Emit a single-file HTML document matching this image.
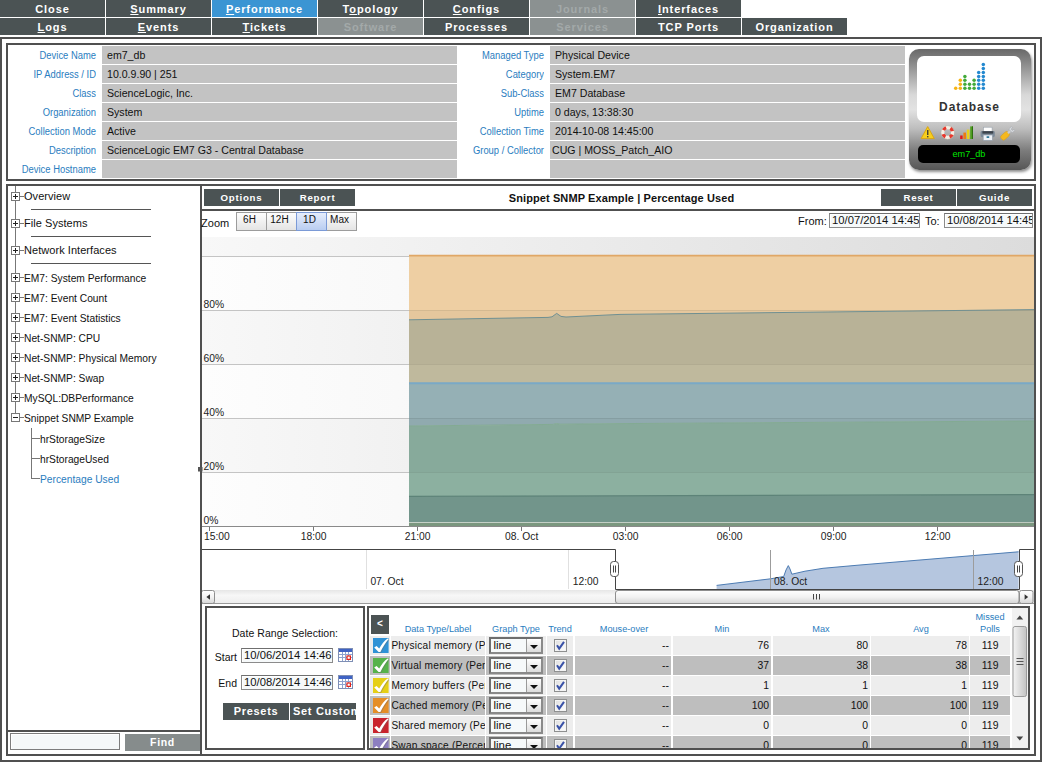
<!DOCTYPE html>
<html>
<head>
<meta charset="utf-8">
<title>Device Performance</title>
<style>
*{box-sizing:border-box;margin:0;padding:0}
html,body{width:1042px;height:762px;overflow:hidden;background:#fff}
body{font-family:"Liberation Sans",sans-serif;font-size:11px;color:#111;position:relative}
.abs{position:absolute}
/* top tabs */
.tab{position:absolute;width:105px;height:17px;padding-top:1px;background:#4b5354;color:#fff;font-weight:bold;font-size:11px;letter-spacing:.9px;text-align:center;line-height:17px;white-space:nowrap}
.tab.r2{top:18px}
.tab.r1{top:0}
.tab.act{background:#3b95d3}
.tab.dis{background:#8b9191;color:#a3a9a9}
.tab u{text-decoration:underline}
/* frames */
#outer{left:0;top:37px;width:1042px;height:725px;border:2px solid #505050}
#devp{left:6px;top:43px;width:1030px;height:138px;border:2px solid #505050}
#lowp{left:6px;top:184px;width:1030px;height:572px;border:2px solid #505050}
/* device rows */
.dl{position:absolute;height:18px;line-height:19px;font-size:10px;color:#2a7dc0;text-align:right;white-space:nowrap;transform:scaleX(.94);transform-origin:100% 50%}
.dv{position:absolute;height:18px;line-height:19px;font-size:10.6px;color:#111;background:#c3c3c3;white-space:nowrap;padding-left:5px}
/* dark buttons */
.btn{position:absolute;background:#4b5354;color:#fff;font-weight:bold;font-size:9.7px;letter-spacing:.75px;text-align:center;white-space:nowrap;overflow:hidden}

.tn{position:absolute;left:0;height:0;white-space:nowrap}
.tn i.pm{position:absolute;left:11px;top:-4px;width:9px;height:9px;border:1px solid #777;background:#fff}
.tn i.pm:before{content:"";position:absolute;left:1px;top:3px;width:5px;height:1px;background:#222}
.tn i.pm.p:after{content:"";position:absolute;left:3px;top:1px;width:1px;height:5px;background:#222}
.tn b{position:absolute;left:20px;top:0;width:4px;height:1px;background:#777}
.tn span{position:absolute;left:24px;top:-6.5px;line-height:14px;font-size:10.9px;transform:scaleX(.94);transform-origin:0 50%}
.tn.big span{font-size:11px;top:-7px;transform:none;letter-spacing:.05px}
.tc{position:absolute;left:40px;height:14px;margin-top:-6.5px;line-height:14px;font-size:10.9px;transform:scaleX(.94);transform-origin:0 50%;white-space:nowrap}

.zb{position:absolute;top:212px;width:31px;height:19px;border:1px solid #9c9c9c;background:linear-gradient(to bottom,#fdfdfd,#e4e4e4);font-size:10px;line-height:13px;text-align:center;color:#111;padding-top:0;padding-right:4px}
.zb.on{background:linear-gradient(to bottom,#e6edfb,#b9cdf1);border-color:#7b9ad6;z-index:2}
.din{position:absolute;border:1px solid #8b8b8b;border-top-color:#6f6f6f;background:#f6f9fa;font-size:11.25px;line-height:13px;padding-left:2px;white-space:nowrap;overflow:hidden;color:#111;box-shadow:inset 1px 1px 0 #fff}

.th{position:absolute;width:100px;text-align:center;font-size:9.2px;line-height:12px;color:#2a7dc0;white-space:nowrap}
.td{position:absolute;height:19px;line-height:20px;font-size:10.4px;color:#111;white-space:nowrap}
.sel{position:absolute;left:3px;top:.5px;width:54px;height:17px;border:2px solid #6e6e6e;border-right-color:#8a8a8a;border-bottom-color:#8a8a8a;background:#f6f9fa;font-size:11.4px;line-height:12px}
.sel span{position:absolute;left:2.5px;top:0}
.sel i{position:absolute;right:0;top:0;width:15px;height:13px;background:linear-gradient(to bottom,#fff,#dcdcdc);border-left:1px solid #9a9a9a}
.sel i:after{content:"";position:absolute;left:2.6px;top:6.5px;border:4.4px solid transparent;border-top:4.2px solid #111;border-bottom:0}
.cb{position:absolute;left:7.5px;top:3px;width:13px;height:13px;border:1px solid #8e8f8f;background:linear-gradient(135deg,#dedede,#fff);box-shadow:inset 0 0 0 1px #f4f4f4}
.cb svg{position:absolute;left:0;top:0}
</style>
</head>
<body>
<!-- TABS -->
<div class="tab r1" style="left:0"><span>Close</span></div>
<div class="tab r1" style="left:106px"><u>S</u>ummary</div>
<div class="tab r1 act" style="left:212px"><u>P</u>erformance</div>
<div class="tab r1" style="left:318px">T<u>o</u>pology</div>
<div class="tab r1" style="left:424px"><u>C</u>onfigs</div>
<div class="tab r1 dis" style="left:530px">Journals</div>
<div class="tab r1" style="left:636px"><u>I</u>nterfaces</div>
<div class="tab r2" style="left:0"><u>L</u>ogs</div>
<div class="tab r2" style="left:106px"><u>E</u>vents</div>
<div class="tab r2" style="left:212px"><u>T</u>ickets</div>
<div class="tab r2 dis" style="left:318px">Software</div>
<div class="tab r2" style="left:424px">Processes</div>
<div class="tab r2 dis" style="left:530px">Services</div>
<div class="tab r2" style="left:636px">TCP Ports</div>
<div class="tab r2" style="left:742px">Organization</div>

<!-- FRAMES -->
<div id="outer" class="abs"></div>
<div id="devp" class="abs"></div>
<div id="lowp" class="abs"></div>

<!-- DEVICE PANEL -->
<div id="dev">
<div class="dl" style="left:8px;width:88px;top:46px">Device Name</div><div class="dv" style="left:102px;width:355px;top:46px">em7_db</div>
<div class="dl" style="left:8px;width:88px;top:65px">IP Address / ID</div><div class="dv" style="left:102px;width:355px;top:65px">10.0.9.90 | 251</div>
<div class="dl" style="left:8px;width:88px;top:84px">Class</div><div class="dv" style="left:102px;width:355px;top:84px">ScienceLogic, Inc.</div>
<div class="dl" style="left:8px;width:88px;top:103px">Organization</div><div class="dv" style="left:102px;width:355px;top:103px">System</div>
<div class="dl" style="left:8px;width:88px;top:122px">Collection Mode</div><div class="dv" style="left:102px;width:355px;top:122px">Active</div>
<div class="dl" style="left:8px;width:88px;top:141px">Description</div><div class="dv" style="left:102px;width:355px;top:141px">ScienceLogic EM7 G3 - Central Database</div>
<div class="dl" style="left:8px;width:88px;top:160px">Device Hostname</div><div class="dv" style="left:102px;width:355px;top:160px"></div>

<div class="dl" style="left:458px;width:86px;top:46px">Managed Type</div><div class="dv" style="left:550px;width:355px;top:46px">Physical Device</div>
<div class="dl" style="left:458px;width:86px;top:65px">Category</div><div class="dv" style="left:550px;width:355px;top:65px">System.EM7</div>
<div class="dl" style="left:458px;width:86px;top:84px">Sub-Class</div><div class="dv" style="left:550px;width:355px;top:84px">EM7 Database</div>
<div class="dl" style="left:458px;width:86px;top:103px">Uptime</div><div class="dv" style="left:550px;width:355px;top:103px">0 days, 13:38:30</div>
<div class="dl" style="left:458px;width:86px;top:122px">Collection Time</div><div class="dv" style="left:550px;width:355px;top:122px">2014-10-08 14:45:00</div>
<div class="dl" style="left:458px;width:86px;top:141px">Group / Collector</div><div class="dv" style="left:550px;width:355px;top:141px;padding-left:2px">CUG | MOSS_Patch_AIO</div>
<div class="dv" style="left:550px;width:355px;top:160px"></div>
</div>

<!-- DEVICE ICON BOX -->
<div class="abs" style="left:909px;top:49px;width:122px;height:121px;border-radius:10px;background:linear-gradient(to bottom,#686868 0%,#8a8a8a 12%,#d9d9d9 38%,#e2e2e2 50%,#bdbdbd 66%,#7c7c7c 84%,#565656 100%);box-shadow:1px 2px 3px rgba(0,0,0,.45)"></div>
<div class="abs" style="left:917px;top:56px;width:104px;height:66px;border-radius:7px;background:#fff"></div>
<svg class="abs" style="left:945px;top:55px" width="50" height="40" viewBox="0 0 50 40">
<g fill="#f5b416"><circle cx="10.7" cy="33.2" r="1.75"/><circle cx="15.3" cy="33.2" r="1.75"/><circle cx="15.3" cy="29.25" r="1.75"/><circle cx="15.3" cy="25.3" r="1.75"/></g>
<g fill="#43aa3a"><circle cx="19.9" cy="33.2" r="1.75"/><circle cx="19.9" cy="29.25" r="1.75"/><circle cx="19.9" cy="25.3" r="1.75"/><circle cx="19.9" cy="21.4" r="1.75"/><circle cx="24.5" cy="33.2" r="1.75"/><circle cx="24.5" cy="29.25" r="1.75"/><circle cx="29.1" cy="33.2" r="1.75"/><circle cx="29.1" cy="29.25" r="1.75"/><circle cx="29.1" cy="25.3" r="1.75"/></g>
<g fill="#2389d0"><circle cx="33.7" cy="33.2" r="1.75"/><circle cx="33.7" cy="29.25" r="1.75"/><circle cx="33.7" cy="25.3" r="1.75"/><circle cx="33.7" cy="21.4" r="1.75"/><circle cx="33.7" cy="17.4" r="1.75"/><circle cx="38.3" cy="33.2" r="1.75"/><circle cx="38.3" cy="29.25" r="1.75"/><circle cx="38.3" cy="25.3" r="1.75"/><circle cx="38.3" cy="21.4" r="1.75"/><circle cx="38.3" cy="17.4" r="1.75"/><circle cx="38.3" cy="13.5" r="1.75"/><circle cx="38.3" cy="9.6" r="1.75"/></g>
</svg>
<div class="abs" style="left:917px;top:98px;width:104px;text-align:center;font-weight:bold;font-size:12px;letter-spacing:.95px;color:#333;line-height:16px;padding-left:1px;margin-top:1px">Database</div>
<!-- small icons -->
<svg class="abs" style="left:919px;top:124px" width="100" height="19" viewBox="0 0 100 19">
<!-- warning -->
<path d="M8.7 2.6 L15.3 14.6 L2.1 14.6 Z" fill="#f7cf1d" stroke="#d9a514" stroke-width="1" stroke-linejoin="round"/>
<rect x="8.1" y="6" width="1.3" height="5" fill="#333"/><rect x="8.1" y="12" width="1.3" height="1.4" fill="#333"/>
<!-- lifebuoy -->
<circle cx="28.7" cy="8.5" r="5" fill="none" stroke="#f4efe4" stroke-width="3.4"/>
<circle cx="28.7" cy="8.5" r="5" fill="none" stroke="#e8372c" stroke-width="3.4" stroke-dasharray="3.4 4.454" stroke-dashoffset="-2.227"/>
<circle cx="28.7" cy="8.5" r="6.8" fill="none" stroke="#b9b2a4" stroke-width=".5"/>
<!-- bars -->
<rect x="41.2" y="11.5" width="2.4" height="3.5" fill="#e1161b"/>
<rect x="44.4" y="8.6" width="2.6" height="6.4" fill="#ee7b12"/>
<rect x="47.8" y="5.6" width="2.6" height="9.4" fill="#e9d21a"/>
<rect x="51.2" y="2.4" width="2.8" height="12.6" fill="#4f9e1f"/>
<rect x="53" y="2.4" width="1" height="12.6" fill="#2f6e12"/>
<!-- printer -->
<rect x="64.5" y="3.2" width="8.6" height="4.5" fill="#fdfdfd" stroke="#9aa3ad" stroke-width=".6"/>
<rect x="61.6" y="7" width="14.2" height="6.2" rx="1.4" fill="#7d8b99"/>
<rect x="63.4" y="7.2" width="10.8" height="2.4" fill="#3c434b"/>
<rect x="64.2" y="11" width="9.2" height="5.4" fill="#eef3f8" stroke="#8d98a6" stroke-width=".6"/>
<rect x="67.6" y="12.3" width="2.6" height="1.6" fill="#1f6d8f"/>
<!-- wrench -->
<g transform="translate(88.5,9.6) rotate(-42)">
<rect x="-8" y="-2.7" width="9.4" height="5.4" rx="2.2" fill="#f5b81e" stroke="#d99c12" stroke-width=".5"/>
<rect x="0.6" y="-1.1" width="4" height="2.2" fill="#c9ccd0"/>
<path d="M4 -2.6 L7.6 -2.6 L7.6 -1 L5.8 -1 L5.8 1 L7.6 1 L7.6 2.6 L4 2.6 Z" fill="#d5d8dc" stroke="#9a9fa6" stroke-width=".4"/>
</g>
</svg>
<div class="abs" style="left:918px;top:145px;width:102px;height:18px;border-radius:5px;background:#000;color:#00e400;font-size:9.1px;text-align:center;line-height:19.5px">em7_db</div>


<!-- TREE -->
<div id="tree" style="font-size:11px;color:#111">
<div class="abs" style="left:15px;top:186px;width:1px;height:231px;background:#777"></div>
<div class="abs" style="left:31px;top:209px;width:120px;height:1px;background:#555"></div>
<div class="abs" style="left:31px;top:236px;width:120px;height:1px;background:#555"></div>
<div class="abs" style="left:31px;top:263px;width:120px;height:1px;background:#555"></div>
<div class="tn big" style="top:196px"><i class="pm p"></i><b></b><span>Overview</span></div>
<div class="tn big" style="top:223px"><i class="pm p"></i><b></b><span>File Systems</span></div>
<div class="tn big" style="top:250px"><i class="pm p"></i><b></b><span>Network Interfaces</span></div>
<div class="tn" style="top:277px"><i class="pm p"></i><b></b><span>EM7: System Performance</span></div>
<div class="tn" style="top:297px"><i class="pm p"></i><b></b><span>EM7: Event Count</span></div>
<div class="tn" style="top:317px"><i class="pm p"></i><b></b><span>EM7: Event Statistics</span></div>
<div class="tn" style="top:337px"><i class="pm p"></i><b></b><span>Net-SNMP: CPU</span></div>
<div class="tn" style="top:357px"><i class="pm p"></i><b></b><span>Net-SNMP: Physical Memory</span></div>
<div class="tn" style="top:377px"><i class="pm p"></i><b></b><span>Net-SNMP: Swap</span></div>
<div class="tn" style="top:397px"><i class="pm p"></i><b></b><span>MySQL:DBPerformance</span></div>
<div class="tn" style="top:417px"><i class="pm"></i><b></b><span>Snippet SNMP Example</span></div>
<div class="abs" style="left:31px;top:428px;width:1px;height:51px;background:#777"></div>
<div class="abs" style="left:31px;top:438px;width:9px;height:1px;background:#777"></div>
<div class="abs" style="left:31px;top:458px;width:9px;height:1px;background:#777"></div>
<div class="abs" style="left:31px;top:478px;width:9px;height:1px;background:#777"></div>
<div class="tc" style="top:438px">hrStorageSize</div>
<div class="tc" style="top:458px">hrStorageUsed</div>
<div class="tc" style="top:478px;color:#2a7dc0">Percentage Used</div>
</div>
<!-- find -->
<div class="abs" style="left:8px;top:730px;width:192px;height:2px;background:#505050"></div>
<div class="abs" style="left:200px;top:186px;width:2px;height:568px;background:#505050"></div>
<div class="abs" style="left:10px;top:733px;width:110px;height:17px;border:1px solid #7d7d7d;background:#f5f8f9;box-shadow:inset 1px 1px 0 #fff"></div>
<div class="btn" style="left:125px;top:734px;width:75px;height:17px;line-height:17px;background:#868c8c;font-size:10.5px;letter-spacing:.7px">Find</div>


<!-- CHART -->
<div class="btn" style="left:204px;top:189px;width:75px;height:17px;line-height:17px">Options</div>
<div class="btn" style="left:280px;top:189px;width:75px;height:17px;line-height:17px">Report</div>
<div class="btn" style="left:881px;top:189px;width:75px;height:17px;line-height:17px">Reset</div>
<div class="btn" style="left:957px;top:189px;width:75px;height:17px;line-height:17px">Guide</div>
<div class="abs" style="left:420px;top:191px;width:403px;text-align:center;font-weight:bold;font-size:11px;line-height:14px;letter-spacing:.1px;color:#111;white-space:nowrap">Snippet SNMP Example | Percentage Used</div>
<div class="abs" style="left:202px;top:209px;width:832px;height:2px;background:#505050"></div>
<!-- zoom row -->
<div class="abs" style="left:201px;top:216px;font-size:11px;line-height:14px;letter-spacing:.05px">Zoom</div>
<div class="zb" style="left:236px">6H</div><div class="zb" style="left:266px">12H</div><div class="zb on" style="left:296px">1D</div><div class="zb" style="left:326px">Max</div>
<div class="abs" style="left:798px;top:214px;font-size:11px;line-height:14px">From:</div>
<div class="din" style="left:829px;top:213px;width:91px;height:15px">10/07/2014 14:45</div>
<div class="abs" style="left:925px;top:214px;font-size:11px;line-height:14px">To:</div>
<div class="din" style="left:944px;top:213px;width:89px;height:15px">10/08/2014 14:45</div>
<svg class="abs" style="left:196px;top:232px" width="838" height="374" viewBox="196 232 838 374" font-family="Liberation Sans, sans-serif">
<defs>
<linearGradient id="bgL" x1="0" y1="0" x2="1" y2="0"><stop offset="0" stop-color="#fdfdfd"/><stop offset="1" stop-color="#ececec"/></linearGradient>
<linearGradient id="bgD" x1="0" y1="0" x2="1" y2="0"><stop offset="0" stop-color="#f8f8f8"/><stop offset="1" stop-color="#dcdcdc"/></linearGradient>
<linearGradient id="sb" x1="0" y1="0" x2="0" y2="1"><stop offset="0" stop-color="#ffffff"/><stop offset=".5" stop-color="#f2f2f2"/><stop offset="1" stop-color="#d6d6d6"/></linearGradient>
<linearGradient id="trk" x1="0" y1="0" x2="0" y2="1"><stop offset="0" stop-color="#e6e6e6"/><stop offset=".4" stop-color="#f7f7f7"/><stop offset="1" stop-color="#ededed"/></linearGradient>
<clipPath id="cp"><rect x="202" y="232" width="832" height="374"/></clipPath>
</defs>
<g clip-path="url(#cp)">
<!-- bands -->
<rect x="202" y="237" width="832" height="19" fill="url(#bgD)"/>
<rect x="202" y="256" width="832" height="54" fill="url(#bgL)"/>
<rect x="202" y="310" width="832" height="54" fill="url(#bgD)"/>
<rect x="202" y="364" width="832" height="54" fill="url(#bgL)"/>
<rect x="202" y="418" width="832" height="54" fill="url(#bgD)"/>
<rect x="202" y="472" width="832" height="54" fill="url(#bgL)"/>
<!-- gridlines -->
<g stroke="#c4c4c4" stroke-width="1"><path d="M202 256.5H1034M202 310.5H1034M202 364.5H1034M202 418.5H1034M202 472.5H1034"/></g>
<!-- series fills -->
<path d="M409 256 H1034 V309.6 L620 314.4 L566 317 L561 316.4 L556.7 313.4 L552 316.8 L548 317.4 L409 319.8 Z" fill="#eecfa3"/>
<path d="M409 319.8 L548 317.4 L552 316.8 L556.7 313.4 L561 316.4 L566 317 L620 314.4 L1034 309.6 V383 H409 Z" fill="#bfb99d"/>

<rect x="409" y="310" width="625" height="10" fill="#e9c89c" opacity="0"/>
<path d="M409 383 H1034 V421 L620 423.6 L560 424.2 L556.5 423.5 L553 424.4 L409 426 Z" fill="#95b0b5"/>
<path d="M409 426 L553 424.4 L556.5 423.5 L560 424.2 L620 423.6 L1034 421 V494.6 L409 496.4 Z" fill="#8cb0a0"/>
<rect x="409" y="472" width="625" height="24" fill="#8cb0a0" opacity=".0"/>
<path d="M409 496.4 L1034 494.6 V522 H409 Z" fill="#72958b"/>
<rect x="409" y="522.6" width="625" height="3.4" fill="#7b977f"/>
<!-- band shading over data -->
<rect x="409" y="310" width="625" height="54" fill="#000" opacity=".035"/>
<rect x="409" y="418" width="625" height="54" fill="#000" opacity=".03"/>
<g stroke="#000" stroke-opacity=".07" stroke-width="1"><path d="M409 310.5H1034M409 364.5H1034M409 418.5H1034M409 472.5H1034"/></g>
<!-- series lines -->
<path d="M409 255.7H1034" stroke="#e0a766" stroke-width="1.8" fill="none"/>
<path d="M409 319.8 L548 317.4 L552 316.8 L556.7 313.4 L561 316.4 L566 317 L620 314.4 L1034 309.6" stroke="#708f90" stroke-width="1" fill="none"/>
<path d="M409 383.2H1034" stroke="#79a9c7" stroke-width="2" fill="none"/>
<path d="M409 426 L553 424.4 L556.5 423.5 L560 424.2 L620 423.6 L1034 421" stroke="#83aa93" stroke-width="1" fill="none"/>
<path d="M409 496.4 L1034 494.6" stroke="#5d8378" stroke-width="1.2" fill="none"/>
<!-- axis -->
<path d="M202 526.5H1034" stroke="#8a8a8a" stroke-width="1"/>
<g stroke="#777" stroke-width="1"><path d="M209.5 527V531M313.5 527V531M417.5 527V531M521.5 527V531M625.5 527V531M729.5 527V531M833.5 527V531M937.5 527V531"/></g>
<g font-size="10.3" fill="#222">
<text x="203.6" y="307.6">80%</text><text x="203.6" y="361.6">60%</text><text x="203.6" y="415.6">40%</text><text x="203.6" y="469.6">20%</text><text x="203.6" y="523.6">0%</text>
<text x="204" y="540.4">15:00</text>
<g text-anchor="middle"><text x="313.7" y="540.4">18:00</text><text x="417.7" y="540.4">21:00</text><text x="521.7" y="540.4">08. Oct</text><text x="625.7" y="540.4">03:00</text><text x="729.7" y="540.4">06:00</text><text x="833.7" y="540.4">09:00</text><text x="937.7" y="540.4">12:00</text></g>
<text x="370.4" y="585">07. Oct</text><text x="572.7" y="585">12:00</text>
</g>
<!-- navigator -->
<path d="M716.6 589 V585.4 L770.7 578.8 L783.7 576.5 L786 570 L788.3 565.6 L790 569 L791.9 574.2 L805 571.2 L823 568.3 L860 565 L1018.6 551.8 V589 Z" fill="#b5c6df"/>
<path d="M716.6 585.4 L770.7 578.8 L783.7 576.5 L786 570 L788.3 565.6 L790 569 L791.9 574.2 L805 571.2 L823 568.3 L860 565 L1018.6 551.8" fill="none" stroke="#4d7cb3" stroke-width="1"/>
<g stroke="#e0e0e0" stroke-width="1"><path d="M366.5 550V589M568.5 550V589"/></g><g stroke="#9c9c9c" stroke-width="1"><path d="M770.5 550V589M973.5 550V589"/></g>
<g font-size="10.3" fill="#222"><text x="774" y="585">08. Oct</text><text x="977.6" y="585">12:00</text></g>
<path d="M202 549.5 H615.5 V589.5 H1019.5 V549.5 H1034" fill="none" stroke="#444" stroke-width="1"/>
<!-- handles -->
<g fill="#fff" stroke="#555" stroke-width="1"><rect x="610.5" y="561.5" width="8" height="15" rx="3"/><rect x="1014.5" y="561.5" width="8" height="15" rx="3"/></g>
<g stroke="#444" stroke-width="1"><path d="M613.5 565.5V572.5M615.5 565.5V572.5M1017.5 565.5V572.5M1019.5 565.5V572.5"/></g>
<!-- scrollbar -->
<rect x="202" y="590" width="832" height="13.5" fill="url(#trk)"/>
<path d="M202 603.5H1034" stroke="#9a9a9a" stroke-width="1"/>
<rect x="201.5" y="590.5" width="13" height="13" rx="2" fill="url(#sb)" stroke="#8e8e8e"/>
<path d="M210 594.3 L206.4 597 L210 599.7 Z" fill="#333"/>
<rect x="1019.5" y="590.5" width="13.5" height="13" rx="2" fill="url(#sb)" stroke="#8e8e8e"/>
<path d="M1024.6 594.3 L1028.2 597 L1024.6 599.7 Z" fill="#333"/>
<rect x="615.5" y="590.5" width="403.5" height="13" rx="2.5" fill="url(#sb)" stroke="#8e8e8e"/>
<path d="M813.5 594V599.5M816.5 594V599.5M819.5 594V599.5" stroke="#444" stroke-width="1"/>
</g>
<rect x="198" y="467" width="4.5" height="4.5" fill="#555"/>
</svg>


<!-- BOTTOM -->
<div class="abs" style="left:205px;top:606px;width:160px;height:144px;border:2px solid #505050"></div>
<div class="abs" style="left:367px;top:606px;width:663px;height:144px;border:2px solid #505050"></div>
<div class="abs" style="left:205px;top:627px;width:160px;text-align:center;font-size:10.5px;line-height:13px;letter-spacing:.05px">Date Range Selection:</div>
<div class="abs" style="left:207px;top:651px;width:30px;text-align:right;font-size:10.5px;line-height:13px">Start</div>
<div class="din" style="left:241px;top:648px;width:92px;height:15px">10/06/2014 14:46</div>
<div class="abs" style="left:207px;top:677px;width:30px;text-align:right;font-size:10.5px;line-height:13px">End</div>
<div class="din" style="left:241px;top:675px;width:92px;height:15px">10/08/2014 14:46</div>
<svg class="abs" style="left:338px;top:648px" width="15" height="14" viewBox="0 0 15 14"><rect x=".5" y=".5" width="14" height="13" fill="#fff" stroke="#7f8fb5"/><rect x="1" y="1" width="13" height="3" fill="#3f63c4"/><g stroke="#8ea2cf" stroke-width="1"><path d="M1 6.5H14M1 9.5H14M4.5 4V13M7.5 4V13M10.5 4V13"/></g><rect x="9" y="8" width="3.4" height="3.4" fill="#fff" stroke="#e2231a" stroke-width="1.2"/></svg>
<svg class="abs" style="left:338px;top:675px" width="15" height="14" viewBox="0 0 15 14"><rect x=".5" y=".5" width="14" height="13" fill="#fff" stroke="#7f8fb5"/><rect x="1" y="1" width="13" height="3" fill="#3f63c4"/><g stroke="#8ea2cf" stroke-width="1"><path d="M1 6.5H14M1 9.5H14M4.5 4V13M7.5 4V13M10.5 4V13"/></g><rect x="9" y="8" width="3.4" height="3.4" fill="#fff" stroke="#e2231a" stroke-width="1.2"/></svg>
<div class="btn" style="left:223px;top:703px;width:66px;height:17px;line-height:17px;letter-spacing:.7px;font-size:11px">Presets</div>
<div class="btn" style="left:290px;top:703px;width:66px;height:17px;line-height:17px;letter-spacing:.7px;font-size:11px;text-align:left;padding-left:3px">Set Custom</div>
<div class="btn" style="left:371px;top:615px;width:18px;height:19px;line-height:17px;font-size:10px;letter-spacing:0">&lt;</div>
<div class="th" style="left:388px;top:623px">Data Type/Label</div>
<div class="th" style="left:466px;top:623px">Graph Type</div>
<div class="th" style="left:510px;top:623px">Trend</div>
<div class="th" style="left:574px;top:623px">Mouse-over</div>
<div class="th" style="left:672px;top:623px">Min</div>
<div class="th" style="left:771px;top:623px">Max</div>
<div class="th" style="left:871px;top:623px">Avg</div>
<div class="th" style="left:940px;top:611px;line-height:12px">Missed<br>Polls</div>
<div class="abs" style="left:369px;top:636px;width:643px;height:112px;overflow:hidden">
<div class="td" style="left:1.0px;top:0px;width:20.0px;background:#ededed;"><svg style="position:absolute;left:2.6px;top:2px" width="16" height="15" viewBox="0 0 16 15"><rect width="15.6" height="15" fill="#2f92d6"/><path d="M1.2 9.6 L3.6 8 L6.2 10.6 C8.4 6.4 11 2.8 14.6 0.4 L15.6 1 C12.4 4.8 9.6 9.4 7.4 14 L5.6 14 Z" fill="#6b6b6b" opacity=".35" transform="translate(.8,.9)"/><path d="M1.2 9.6 L3.6 8 L6.2 10.6 C8.4 6.4 11 2.8 14.6 0.4 L15.6 1 C12.4 4.8 9.6 9.4 7.4 14 L5.6 14 Z" fill="#fff"/></svg></div>
<div class="td" style="left:22.0px;top:0px;width:94.0px;background:#ededed;padding-left:.4px;overflow:hidden;font-size:10.1px;letter-spacing:.25px">Physical memory (Percentage)</div>
<div class="td" style="left:117.0px;top:0px;width:59.5px;background:#ededed;"><div class="sel"><span>line</span><i></i></div></div>
<div class="td" style="left:177.5px;top:0px;width:26.5px;background:#ededed;"><div class="cb"><svg width="11" height="11" viewBox="0 0 11 11"><path d="M2 5.2 L4.2 8.6 L9 1.8" fill="none" stroke="#3a52a8" stroke-width="2"/></svg></div></div>
<div class="td" style="left:205.5px;top:0px;width:96.5px;background:#ededed;text-align:right;padding-right:2px">--</div>
<div class="td" style="left:303.5px;top:0px;width:98.5px;background:#ededed;text-align:right;padding-right:2px">76</div>
<div class="td" style="left:403.5px;top:0px;width:97.5px;background:#ededed;text-align:right;padding-right:2px">80</div>
<div class="td" style="left:502.0px;top:0px;width:98.0px;background:#ededed;text-align:right;padding-right:2px">78</div>
<div class="td" style="left:601.3px;top:0px;width:39.7px;background:#ededed;text-align:center">119</div>
<div class="td" style="left:1.0px;top:20px;width:20.0px;background:#bebebe;"><svg style="position:absolute;left:2.6px;top:2px" width="16" height="15" viewBox="0 0 16 15"><rect width="15.6" height="15" fill="#56b24a"/><path d="M1.2 9.6 L3.6 8 L6.2 10.6 C8.4 6.4 11 2.8 14.6 0.4 L15.6 1 C12.4 4.8 9.6 9.4 7.4 14 L5.6 14 Z" fill="#6b6b6b" opacity=".35" transform="translate(.8,.9)"/><path d="M1.2 9.6 L3.6 8 L6.2 10.6 C8.4 6.4 11 2.8 14.6 0.4 L15.6 1 C12.4 4.8 9.6 9.4 7.4 14 L5.6 14 Z" fill="#fff"/></svg></div>
<div class="td" style="left:22.0px;top:20px;width:94.0px;background:#bebebe;padding-left:.4px;overflow:hidden;font-size:10.1px;letter-spacing:.25px">Virtual memory (Percentage)</div>
<div class="td" style="left:117.0px;top:20px;width:59.5px;background:#bebebe;"><div class="sel"><span>line</span><i></i></div></div>
<div class="td" style="left:177.5px;top:20px;width:26.5px;background:#bebebe;"><div class="cb"><svg width="11" height="11" viewBox="0 0 11 11"><path d="M2 5.2 L4.2 8.6 L9 1.8" fill="none" stroke="#3a52a8" stroke-width="2"/></svg></div></div>
<div class="td" style="left:205.5px;top:20px;width:96.5px;background:#bebebe;text-align:right;padding-right:2px">--</div>
<div class="td" style="left:303.5px;top:20px;width:98.5px;background:#bebebe;text-align:right;padding-right:2px">37</div>
<div class="td" style="left:403.5px;top:20px;width:97.5px;background:#bebebe;text-align:right;padding-right:2px">38</div>
<div class="td" style="left:502.0px;top:20px;width:98.0px;background:#bebebe;text-align:right;padding-right:2px">38</div>
<div class="td" style="left:601.3px;top:20px;width:39.7px;background:#bebebe;text-align:center">119</div>
<div class="td" style="left:1.0px;top:40px;width:20.0px;background:#ededed;"><svg style="position:absolute;left:2.6px;top:2px" width="16" height="15" viewBox="0 0 16 15"><rect width="15.6" height="15" fill="#e6cf16"/><path d="M1.2 9.6 L3.6 8 L6.2 10.6 C8.4 6.4 11 2.8 14.6 0.4 L15.6 1 C12.4 4.8 9.6 9.4 7.4 14 L5.6 14 Z" fill="#6b6b6b" opacity=".35" transform="translate(.8,.9)"/><path d="M1.2 9.6 L3.6 8 L6.2 10.6 C8.4 6.4 11 2.8 14.6 0.4 L15.6 1 C12.4 4.8 9.6 9.4 7.4 14 L5.6 14 Z" fill="#fff"/></svg></div>
<div class="td" style="left:22.0px;top:40px;width:94.0px;background:#ededed;padding-left:.4px;overflow:hidden;font-size:10.1px;letter-spacing:.25px">Memory buffers (Percentage)</div>
<div class="td" style="left:117.0px;top:40px;width:59.5px;background:#ededed;"><div class="sel"><span>line</span><i></i></div></div>
<div class="td" style="left:177.5px;top:40px;width:26.5px;background:#ededed;"><div class="cb"><svg width="11" height="11" viewBox="0 0 11 11"><path d="M2 5.2 L4.2 8.6 L9 1.8" fill="none" stroke="#3a52a8" stroke-width="2"/></svg></div></div>
<div class="td" style="left:205.5px;top:40px;width:96.5px;background:#ededed;text-align:right;padding-right:2px">--</div>
<div class="td" style="left:303.5px;top:40px;width:98.5px;background:#ededed;text-align:right;padding-right:2px">1</div>
<div class="td" style="left:403.5px;top:40px;width:97.5px;background:#ededed;text-align:right;padding-right:2px">1</div>
<div class="td" style="left:502.0px;top:40px;width:98.0px;background:#ededed;text-align:right;padding-right:2px">1</div>
<div class="td" style="left:601.3px;top:40px;width:39.7px;background:#ededed;text-align:center">119</div>
<div class="td" style="left:1.0px;top:60px;width:20.0px;background:#bebebe;"><svg style="position:absolute;left:2.6px;top:2px" width="16" height="15" viewBox="0 0 16 15"><rect width="15.6" height="15" fill="#e58e26"/><path d="M1.2 9.6 L3.6 8 L6.2 10.6 C8.4 6.4 11 2.8 14.6 0.4 L15.6 1 C12.4 4.8 9.6 9.4 7.4 14 L5.6 14 Z" fill="#6b6b6b" opacity=".35" transform="translate(.8,.9)"/><path d="M1.2 9.6 L3.6 8 L6.2 10.6 C8.4 6.4 11 2.8 14.6 0.4 L15.6 1 C12.4 4.8 9.6 9.4 7.4 14 L5.6 14 Z" fill="#fff"/></svg></div>
<div class="td" style="left:22.0px;top:60px;width:94.0px;background:#bebebe;padding-left:.4px;overflow:hidden;font-size:10.1px;letter-spacing:.25px">Cached memory (Percentage)</div>
<div class="td" style="left:117.0px;top:60px;width:59.5px;background:#bebebe;"><div class="sel"><span>line</span><i></i></div></div>
<div class="td" style="left:177.5px;top:60px;width:26.5px;background:#bebebe;"><div class="cb"><svg width="11" height="11" viewBox="0 0 11 11"><path d="M2 5.2 L4.2 8.6 L9 1.8" fill="none" stroke="#3a52a8" stroke-width="2"/></svg></div></div>
<div class="td" style="left:205.5px;top:60px;width:96.5px;background:#bebebe;text-align:right;padding-right:2px">--</div>
<div class="td" style="left:303.5px;top:60px;width:98.5px;background:#bebebe;text-align:right;padding-right:2px">100</div>
<div class="td" style="left:403.5px;top:60px;width:97.5px;background:#bebebe;text-align:right;padding-right:2px">100</div>
<div class="td" style="left:502.0px;top:60px;width:98.0px;background:#bebebe;text-align:right;padding-right:2px">100</div>
<div class="td" style="left:601.3px;top:60px;width:39.7px;background:#bebebe;text-align:center">119</div>
<div class="td" style="left:1.0px;top:80px;width:20.0px;background:#ededed;"><svg style="position:absolute;left:2.6px;top:2px" width="16" height="15" viewBox="0 0 16 15"><rect width="15.6" height="15" fill="#c9232d"/><path d="M1.2 9.6 L3.6 8 L6.2 10.6 C8.4 6.4 11 2.8 14.6 0.4 L15.6 1 C12.4 4.8 9.6 9.4 7.4 14 L5.6 14 Z" fill="#6b6b6b" opacity=".35" transform="translate(.8,.9)"/><path d="M1.2 9.6 L3.6 8 L6.2 10.6 C8.4 6.4 11 2.8 14.6 0.4 L15.6 1 C12.4 4.8 9.6 9.4 7.4 14 L5.6 14 Z" fill="#fff"/></svg></div>
<div class="td" style="left:22.0px;top:80px;width:94.0px;background:#ededed;padding-left:.4px;overflow:hidden;font-size:10.1px;letter-spacing:.25px">Shared memory (Percentage)</div>
<div class="td" style="left:117.0px;top:80px;width:59.5px;background:#ededed;"><div class="sel"><span>line</span><i></i></div></div>
<div class="td" style="left:177.5px;top:80px;width:26.5px;background:#ededed;"><div class="cb"><svg width="11" height="11" viewBox="0 0 11 11"><path d="M2 5.2 L4.2 8.6 L9 1.8" fill="none" stroke="#3a52a8" stroke-width="2"/></svg></div></div>
<div class="td" style="left:205.5px;top:80px;width:96.5px;background:#ededed;text-align:right;padding-right:2px">--</div>
<div class="td" style="left:303.5px;top:80px;width:98.5px;background:#ededed;text-align:right;padding-right:2px">0</div>
<div class="td" style="left:403.5px;top:80px;width:97.5px;background:#ededed;text-align:right;padding-right:2px">0</div>
<div class="td" style="left:502.0px;top:80px;width:98.0px;background:#ededed;text-align:right;padding-right:2px">0</div>
<div class="td" style="left:601.3px;top:80px;width:39.7px;background:#ededed;text-align:center">119</div>
<div class="td" style="left:1.0px;top:100px;width:20.0px;background:#bebebe;"><svg style="position:absolute;left:2.6px;top:2px" width="16" height="15" viewBox="0 0 16 15"><rect width="15.6" height="15" fill="#8d7fc1"/><path d="M1.2 9.6 L3.6 8 L6.2 10.6 C8.4 6.4 11 2.8 14.6 0.4 L15.6 1 C12.4 4.8 9.6 9.4 7.4 14 L5.6 14 Z" fill="#6b6b6b" opacity=".35" transform="translate(.8,.9)"/><path d="M1.2 9.6 L3.6 8 L6.2 10.6 C8.4 6.4 11 2.8 14.6 0.4 L15.6 1 C12.4 4.8 9.6 9.4 7.4 14 L5.6 14 Z" fill="#fff"/></svg></div>
<div class="td" style="left:22.0px;top:100px;width:94.0px;background:#bebebe;padding-left:.4px;overflow:hidden;font-size:10.1px;letter-spacing:.25px">Swap space (Percentage)</div>
<div class="td" style="left:117.0px;top:100px;width:59.5px;background:#bebebe;"><div class="sel"><span>line</span><i></i></div></div>
<div class="td" style="left:177.5px;top:100px;width:26.5px;background:#bebebe;"><div class="cb"><svg width="11" height="11" viewBox="0 0 11 11"><path d="M2 5.2 L4.2 8.6 L9 1.8" fill="none" stroke="#3a52a8" stroke-width="2"/></svg></div></div>
<div class="td" style="left:205.5px;top:100px;width:96.5px;background:#bebebe;text-align:right;padding-right:2px">--</div>
<div class="td" style="left:303.5px;top:100px;width:98.5px;background:#bebebe;text-align:right;padding-right:2px">0</div>
<div class="td" style="left:403.5px;top:100px;width:97.5px;background:#bebebe;text-align:right;padding-right:2px">0</div>
<div class="td" style="left:502.0px;top:100px;width:98.0px;background:#bebebe;text-align:right;padding-right:2px">0</div>
<div class="td" style="left:601.3px;top:100px;width:39.7px;background:#bebebe;text-align:center">119</div>
</div>
<div class="abs" style="left:1012px;top:608px;width:16px;height:140px;background:#f1f1f1"></div>
<svg class="abs" style="left:1012px;top:608px" width="16" height="140" viewBox="0 0 16 140"><defs><linearGradient id="vt" x1="0" y1="0" x2="1" y2="0"><stop offset="0" stop-color="#f4f4f4"/><stop offset=".45" stop-color="#dedede"/><stop offset="1" stop-color="#c2c2c2"/></linearGradient></defs>
<path d="M4.4 11.4 L7.8 7.4 L11.2 11.4 Z" fill="#444"/><path d="M4.4 128.6 L7.8 132.6 L11.2 128.6 Z" fill="#444"/>
<rect x="1" y="18.5" width="13.5" height="70" rx="2" fill="url(#vt)" stroke="#9a9a9a"/>
<path d="M4.5 50.5H11.5M4.5 53.5H11.5M4.5 56.5H11.5" stroke="#555"/></svg>
</body>
</html>
